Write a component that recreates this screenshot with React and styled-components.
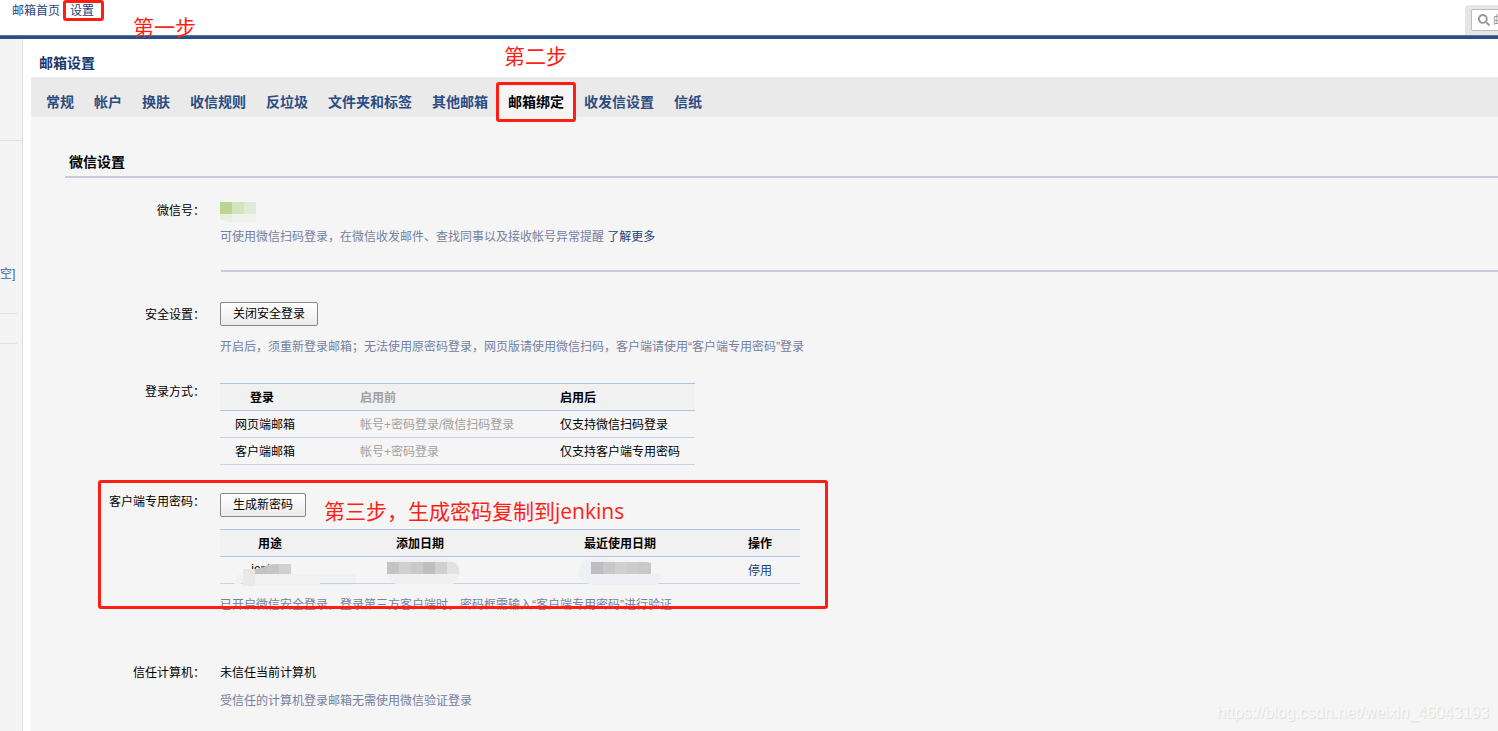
import React from "react";
import styled, { createGlobalStyle, css } from "styled-components";
import { FaSearch } from "react-icons/fa";

const RED = "#ff1e14";
const LINK = "#1f4278";

const GlobalStyle = createGlobalStyle`
  * { box-sizing: border-box; }
  body {
    margin: 0;
    background: #fff;
    color: #000;
    font: 12px/20px "Liberation Sans", "Noto Sans CJK SC", sans-serif;
    overflow-x: hidden;
  }
  h1, h2, p { margin: 0; }
`;

const Page = styled.div`
  position: relative;
  display: flex;
  flex-direction: column;
  min-height: 100vh;
  overflow: hidden;
`;

const Header = styled.header`
  position: relative;
  display: flex;
  justify-content: space-between;
  height: 39px;
  border-bottom: 3px solid #24508a;
  box-shadow: inset 0 -1px #64748f;
`;

const TopLinks = styled.nav`
  display: flex;
  align-items: flex-start;
  gap: 10px;
  padding: 1px 0 0 12px;
`;

const Link = styled.a`
  position: relative;
  color: ${LINK};
  text-decoration: none;
`;

const Outline = styled.span`
  position: absolute;
  border: 3px solid ${RED};
  border-radius: 3px;
  pointer-events: none;
  ${(p) => p.$around === "link" && css`inset: -1px -10px 0 -7px;`}
  ${(p) => p.$around === "tab" && css`inset: -4px -2px -5px -2px;`}
  ${(p) => p.$around === "row" && css`
    top: -12px;
    left: 33px;
    width: 730px;
    height: 129px;
  `}
`;

const Note = styled.span`
  position: absolute;
  left: ${(p) => p.$left}px;
  top: ${(p) => p.$top}px;
  color: ${RED};
  font: 21px/30px "Open Sans", "Noto Sans CJK SC", sans-serif;
  white-space: nowrap;
  pointer-events: none;
`;

const SearchPanel = styled.form`
  flex: none;
  width: 33px;
  margin: 5px 0 1px;
  padding: 4px 0 4px 6px;
  background: #e6e6e6;
  border-top-left-radius: 4px;
  overflow: hidden;
`;

const SearchBox = styled.label`
  display: flex;
  align-items: center;
  gap: 3px;
  width: 160px;
  height: 22px;
  padding-left: 6px;
  background: #fff;
  border: 1px solid #bdbdbd;
  border-radius: 2px;
  color: #999;
`;

const SearchInput = styled.input`
  width: 120px;
  padding: 1px 0 0;
  border: 0;
  outline: 0;
  background: none;
  font: inherit;
  &::placeholder { color: #999; }
`;

const Body = styled.div`
  flex: 1;
  display: flex;
`;

const Sidebar = styled.aside`
  flex: none;
  width: 23px;
  margin-right: 8px;
  background: #f4f4f4;
  border-right: 1px solid #dedede;
`;

const SideBlock = styled.div`
  height: ${(p) => p.$height}px;
  margin-right: ${(p) => (p.$inset ? 5 : 0)}px;
  border-bottom: 1px solid #dedede;
  padding-top: ${(p) => p.$pad || 0}px;
  white-space: nowrap;
`;

const SideLink = styled(Link)`
  color: #3c62a8;
`;

const Main = styled.main`
  flex: 1;
  min-width: 0;
  display: flex;
  flex-direction: column;
`;

const PageTitle = styled.h1`
  height: 38px;
  padding-left: 8px;
  font-size: 14px;
  line-height: 48px;
  color: #16386e;
`;

const Tabs = styled.nav`
  display: flex;
  align-items: flex-end;
  height: 40px;
  padding-left: 5px;
  background: #eaeaea;
`;

const Tab = styled.a`
  position: relative;
  height: 31px;
  padding: 1px 10px 0;
  font-size: 14px;
  line-height: 31px;
  font-weight: bold;
  text-decoration: none;
  white-space: nowrap;
  color: ${(p) => (p.$active ? "#000" : "#2b4c82")};
  background: ${(p) => (p.$active ? "#f5f5f5" : "none")};
`;

const Content = styled.section`
  flex: 1;
  padding: 35px 0 20px 34px;
  background: #f5f5f5;
`;

const SectionTitle = styled.h2`
  padding: 0 0 4px 4px;
  border-bottom: 2px solid #c6ccdb;
  font-size: 14px;
  line-height: 20px;
`;

const Row = styled.div`
  position: relative;
  display: grid;
  grid-template-columns: 140px minmax(0, 1fr);
  column-gap: 15px;
  margin-top: ${(p) => p.$gap}px;
`;

const Label = styled.div`
  padding-top: ${(p) => p.$pad || 0}px;
  text-align: right;
`;

const Field = styled.div`
  padding-top: ${(p) => p.$pad || 0}px;
`;

const Hint = styled.p`
  margin-top: ${(p) => p.$gap}px;
  color: #74809f;
`;

const Divider = styled.div`
  height: 2px;
  margin: 23px 0 0 156px;
  background: #c6ccdb;
`;

const Button = styled.button`
  display: block;
  width: ${(p) => p.$width}px;
  height: 24px;
  padding: 0;
  border: 1px solid #868686;
  border-radius: 2px;
  background: linear-gradient(#fff, #ebebeb);
  color: #000;
  font: inherit;
  line-height: 22px;
`;

const Table = styled.table`
  width: ${(p) => p.$width}px;
  margin-top: ${(p) => p.$gap || 0}px;
  border-top: 1px solid #a9c6e8;
  border-spacing: 0;
  table-layout: fixed;
  text-align: ${(p) => p.$align};
`;

const Th = styled.th`
  width: ${(p) => p.$width}px;
  height: 27px;
  padding: 2px 0 0 ${(p) => p.$pad || 0}px;
  border-bottom: 1px solid #a9c6e8;
  background: #f1f1f1;
  color: ${(p) => (p.$muted ? "#a0a0a0" : "#000")};
  text-align: inherit;
`;

const Td = styled.td`
  position: relative;
  height: 27px;
  padding: 2px 0 0 ${(p) => p.$pad || 0}px;
  border-bottom: 1px solid #c3d3e6;
  color: ${(p) => (p.$muted ? "#a0a0a0" : "#000")};
  vertical-align: ${(p) => (p.$top ? "top" : "middle")};
  white-space: nowrap;
`;

const Mosaic = styled.svg`
  display: block;
`;

const CellMosaic = styled.svg`
  position: absolute;
  left: 0;
  top: 0;
  overflow: visible;
`;

const Watermark = styled.div`
  position: absolute;
  right: 9px;
  bottom: 8px;
  font-size: 16px;
  color: #f8f8f8;
  text-shadow: 1px 1px 1px #dadada;
`;

const tabs = ["常规", "帐户", "换肤", "收信规则", "反垃圾", "文件夹和标签", "其他邮箱", "邮箱绑定", "收发信设置", "信纸"];

const loginModes = [
  ["网页端邮箱", "帐号+密码登录/微信扫码登录", "仅支持微信扫码登录"],
  ["客户端邮箱", "帐号+密码登录", "仅支持客户端专用密码"],
];

export default function App() {
  return (
    <Page lang="zh-CN">
      <GlobalStyle />
      <Header>
        <TopLinks>
          <Link href="#home">邮箱首页</Link>
          <Link href="#settings">
            设置
            <Outline $around="link" />
          </Link>
        </TopLinks>
        <SearchPanel>
          <SearchBox>
            <FaSearch size={12} aria-hidden="true" />
            <SearchInput type="text" placeholder="邮" aria-label="搜索" />
          </SearchBox>
        </SearchPanel>
        <Note $left={133} $top={12}>第一步</Note>
        <Note $left={504} $top={41}>第二步</Note>
      </Header>
      <Body>
        <Sidebar>
          <SideBlock $height={102} />
          <SideBlock $height={173} $pad={123} $inset>
            <SideLink href="#empty">空]</SideLink>
          </SideBlock>
          <SideBlock $height={30} $inset />
        </Sidebar>
        <Main>
          <PageTitle>邮箱设置</PageTitle>
          <Tabs>
            {tabs.map((name) => {
              const active = name === "邮箱绑定";
              return (
                <Tab key={name} href="#tab" $active={active}>
                  {name}
                  {active && <Outline $around="tab" />}
                </Tab>
              );
            })}
          </Tabs>
          <Content>
            <SectionTitle>微信设置</SectionTitle>
            <Row $gap={22}>
              <Label $pad={1}>微信号：</Label>
              <Field $pad={2}>
                <Mosaic width="36" height="20" aria-hidden="true">
                  <rect width="12" height="12" fill="#bad592" />
                  <rect x="12" width="12" height="12" fill="#d5e2bf" />
                  <rect x="24" width="12" height="12" fill="#e1e9d7" />
                  <path d="M0 12h12v8Q5 20 0 17z" fill="#e8eee0" />
                  <rect x="12" y="12" width="24" height="8" fill="#f0f2ec" />
                </Mosaic>
                <Hint $gap={5}>
                  可使用微信扫码登录，在微信收发邮件、查找同事以及接收帐号异常提醒 <Link href="#more">了解更多</Link>
                </Hint>
              </Field>
            </Row>
            <Divider />
            <Row $gap={30}>
              <Label $pad={3}>安全设置：</Label>
              <Field>
                <Button type="button" $width={98}>关闭安全登录</Button>
                <Hint $gap={11}>
                  开启后，须重新登录邮箱；无法使用原密码登录，网页版请使用微信扫码，客户端请使用“客户端专用密码”登录
                </Hint>
              </Field>
            </Row>
            <Row $gap={24}>
              <Label $pad={1}>登录方式：</Label>
              <Field $pad={2}>
                <Table $width={475} $align="left">
                  <thead>
                    <tr>
                      <Th $width={125} $pad={30}>登录</Th>
                      <Th $width={200} $pad={15} $muted>启用前</Th>
                      <Th $width={150} $pad={15}>启用后</Th>
                    </tr>
                  </thead>
                  <tbody>
                    {loginModes.map(([name, before, after]) => (
                      <tr key={name}>
                        <Td $pad={15}>{name}</Td>
                        <Td $pad={15} $muted>{before}</Td>
                        <Td $pad={15}>{after}</Td>
                      </tr>
                    ))}
                  </tbody>
                </Table>
              </Field>
            </Row>
            <Row $gap={27}>
              <Label>客户端专用密码：</Label>
              <Field $pad={1}>
                <Button type="button" $width={86}>生成新密码</Button>
                <Table $width={580} $gap={12} $align="center">
                  <thead>
                    <tr>
                      <Th $width={100}>用途</Th>
                      <Th $width={200}>添加日期</Th>
                      <Th $width={200}>最近使用日期</Th>
                      <Th $width={80}>操作</Th>
                    </tr>
                  </thead>
                  <tbody>
                    <tr>
                      <Td $top>
                        jenkins
                        <CellMosaic width="140" height="30" aria-hidden="true">
                          <path d="M17 18Q20 17 23 17V12Q30 12 35 12Q42 12 47 8Q50 7 55 7H71V17H136V27L130 29H23V26Q17 28 14 27z" fill="#f0f1f3" />
                          <rect x="23" y="12" width="12" height="6" fill="#e8e8e8" />
                          <path d="M35 12Q42 12 47 8V17H35z" fill="#c3c3c3" />
                          <path d="M47 8L55 7H60V17H47z" fill="#c6c6c6" />
                          <rect x="59" y="7" width="12" height="10" fill="#d0d0d0" />
                          <rect x="23" y="17" width="12" height="12" fill="#e8e9eb" />
                        </CellMosaic>
                      </Td>
                      <Td>
                        <CellMosaic width="150" height="30" aria-hidden="true">
                          <path d="M67 5Q72 2 80 2H125Q139 5 139 12V17Q137 24 133 27H76Q70 24 67 17z" fill="#eff0f2" />
                          <rect x="67" y="5" width="12" height="12" fill="#c4c4c4" />
                          <rect x="79" y="5" width="12" height="12" fill="#d0d0d0" />
                          <rect x="91" y="5" width="12" height="12" fill="#c9c9c9" />
                          <rect x="103" y="5" width="12" height="12" fill="#bebebe" />
                          <rect x="115" y="5" width="12" height="12" fill="#d0d0d0" />
                          <path d="M127 5h7Q139 8 139 13V17H127z" fill="#e2e2e2" />
                        </CellMosaic>
                      </Td>
                      <Td>
                        <CellMosaic width="150" height="30" aria-hidden="true">
                          <path d="M60 17Q58 5 68 2H88L95 5H131V17H142Q141 26 137 28H73Q60 25 57 17z" fill="#eff0f3" />
                          <rect x="71" y="5" width="12" height="12" fill="#bdbdbd" />
                          <rect x="83" y="5" width="12" height="12" fill="#c8c8c8" />
                          <rect x="95" y="5" width="12" height="12" fill="#d0d0d0" />
                          <rect x="107" y="5" width="12" height="12" fill="#cccccc" />
                          <path d="M119 5h7l5 1V17H119z" fill="#c8c8c8" />
                        </CellMosaic>
                      </Td>
                      <Td><Link href="#disable">停用</Link></Td>
                    </tr>
                  </tbody>
                </Table>
                <Hint $gap={11}>
                  已开启微信安全登录。登录第三方客户端时，密码框需输入“客户端专用密码”进行验证
                </Hint>
              </Field>
              <Outline $around="row" />
              <Note $left={259} $top={4}>第三步，生成密码复制到jenkins</Note>
            </Row>
            <Row $gap={48}>
              <Label>信任计算机：</Label>
              <Field>
                未信任当前计算机
                <Hint $gap={8}>受信任的计算机登录邮箱无需使用微信验证登录</Hint>
              </Field>
            </Row>
          </Content>
        </Main>
      </Body>
      <Watermark>https://blog.csdn.net/weixin_46043193</Watermark>
    </Page>
  );
}
